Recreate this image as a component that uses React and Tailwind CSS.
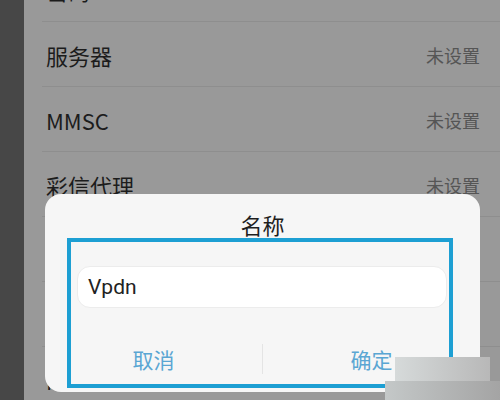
export default function App() {
  const rows = [
    { label: "密码", value: "未设置" },
    { label: "服务器", value: "未设置" },
    { label: "MMSC", value: "未设置" },
    { label: "彩信代理", value: "未设置" },
    { label: "彩信端口", value: "未设置" },
    { label: "MCC", value: "未设置" },
    { label: "MNC", value: "未设置" },
  ];
  const font = { fontFamily: '"Noto Sans CJK SC", "Noto Sans", sans-serif' };
  return (
    <div className="relative w-[500px] h-[400px] overflow-hidden flex" style={font}>
      <div className="w-[24px] h-full bg-[#474747]" />
      <div className="flex-1 h-full bg-[#999999] overflow-hidden">
        <div className="mt-[-43px] flex flex-col">
          {rows.map((r, i) => (
            <div key={i} className="h-[65px] flex items-center justify-between pl-[22px] pr-[20px] relative">
              <span className="text-[22px] text-[#1c1c1c] leading-none">{r.label}</span>
              <span className="text-[18px] text-[#555555] leading-none">{r.value}</span>
              <div className="absolute bottom-0 left-[18px] right-0 h-px bg-[#8e8e8e]" />
            </div>
          ))}
        </div>
      </div>

      <div className="absolute left-[45px] top-[194px] w-[435px] h-[198px] bg-[#f6f6f6] rounded-[16px] flex flex-col">
        <div className="pt-[19px] text-[22px] leading-none text-[#1e1e1e] text-center">名称</div>
        <div className="mt-[31px] ml-[32px] mr-[33px] h-[42px] bg-white rounded-[13px] border border-[#ececec] flex items-center pl-[10px]">
          <span className="text-[21px] text-[#222222] leading-none" style={{ fontFamily: 'Roboto, "Noto Sans", sans-serif' }}>Vpdn</span>
        </div>
        <div className="flex-1 flex items-center pt-[18px]">
          <div className="flex-1 flex justify-center text-[21px] text-[#5aa6d3] leading-none">取消</div>
          <div className="w-px h-[30px] bg-[#e4e4e4]" />
          <div className="flex-1 flex justify-center text-[21px] text-[#5aa6d3] leading-none">确定</div>
        </div>
      </div>

      <div className="absolute left-[67px] top-[238px] w-[386px] h-[150px] border-[4px] border-[#1d9fd3]" />

      <div className="absolute left-[395px] top-[357px] w-[95px] h-[24px] bg-gradient-to-r from-[#d6dada] to-[#b8b8b8]" />
      <div className="absolute left-[385px] top-[381px] w-[115px] h-[19px] bg-gradient-to-r from-[#c4c8c8] to-[#a4a4a4]" />
    </div>
  );
}
